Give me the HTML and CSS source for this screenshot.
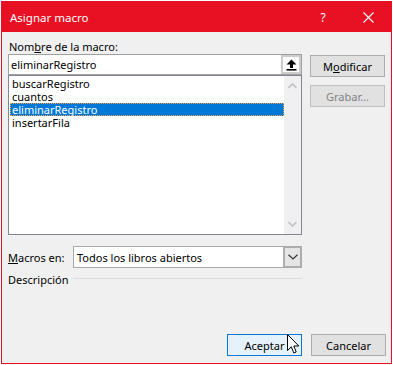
FILE: index.html
```html
<!DOCTYPE html>
<html lang="es">
<head>
<meta charset="utf-8">
<title>Asignar macro</title>
<link rel="stylesheet" href="styles.css">
</head>
<body>
<div class="window">
  <div class="titlebar">
    <span class="title">Asignar macro</span>
    <span class="tb-btn help">?</span>
    <span class="tb-btn close">
      <svg width="11" height="11" viewBox="0 0 11 11"><path d="M0.5 0.5 L10.5 10.5 M10.5 0.5 L0.5 10.5" stroke="#fff" stroke-width="1.1" fill="none"/></svg>
    </span>
  </div>
  <div class="content">
    <div class="top">
      <div class="left">
        <div class="label">Nom<u>b</u>re de la macro:</div>
        <div class="input">
          <span class="input-text">eliminarRegistro</span>
          <span class="up-btn">
            <svg width="11" height="12" viewBox="0 0 11 12"><path d="M5.5 0.5 L10.5 5.5 L7 5.5 L7 9 L4 9 L4 5.5 L0.5 5.5 Z" fill="#000"/><rect x="0.5" y="10" width="10" height="1.6" fill="#000"/></svg>
          </span>
        </div>
        <div class="listbox">
          <div class="items">
            <div class="item">buscarRegistro</div>
            <div class="item">cuantos</div>
            <div class="item selected">eliminarRegistro</div>
            <div class="item">insertarFila</div>
          </div>
          <div class="scrollbar">
            <svg width="9" height="6" viewBox="0 0 9 6"><path d="M0.5 5 L4.5 1 L8.5 5" stroke="#c2c2c2" stroke-width="1.6" fill="none"/></svg>
            <svg width="9" height="6" viewBox="0 0 9 6"><path d="M0.5 1 L4.5 5 L8.5 1" stroke="#c2c2c2" stroke-width="1.6" fill="none"/></svg>
          </div>
        </div>
      </div>
      <div class="right">
        <div class="btn">M<u>o</u>dificar</div>
        <div class="btn disabled">Grabar...</div>
      </div>
    </div>
    <div class="row macros-row">
      <div class="row-label"><u>M</u>acros en:</div>
      <div class="combo">
        <span class="combo-text">Todos los libros abiertos</span>
        <span class="combo-btn">
          <svg width="10" height="6" viewBox="0 0 10 6"><path d="M0.5 0.8 L5 5 L9.5 0.8" stroke="#333" stroke-width="1.2" fill="none"/></svg>
        </span>
      </div>
    </div>
    <div class="row desc-row">
      <div class="row-label">Descripción</div>
      <div class="rule"></div>
    </div>
    <div class="bottom">
      <div class="btn default">Aceptar</div>
      <div class="btn">Cancelar</div>
    </div>
  </div>
  <svg class="cursor" width="13" height="21" viewBox="0 0 13 21"><path d="M0.5 0.5 L0.5 16.5 L4.3 12.8 L6.8 19 L9.2 18 L6.8 12 L11.8 12 Z" fill="#fff" stroke="#000" stroke-width="1" stroke-linejoin="miter"/></svg>
</div>
</body>
</html>
```

FILE: styles.css
```css
* { box-sizing: border-box; }
html, body { margin: 0; padding: 0; }
body {
  background: #ffffff;
  font-family: "Noto Sans", "Open Sans", sans-serif;
  font-size: 11px;
  color: #000;
  width: 393px;
  height: 365px;
  overflow: hidden;
}
u { text-decoration: underline; text-underline-offset: 1px; }

.window {
  position: relative;
  margin: 1px 0 0 1px;
  width: 391px;
  height: 363px;
  border: 1px solid #e81123;
  background: #f0f0f0;
  display: flex;
  flex-direction: column;
}

.titlebar {
  height: 30px;
  background: #e81123;
  color: #fff;
  display: flex;
  align-items: center;
  flex: none;
}
.title {
  flex: 1;
  padding-left: 8px;
  font-size: 11.5px;
}
.tb-btn {
  width: 46px;
  height: 30px;
  display: flex;
  align-items: center;
  justify-content: center;
  font-size: 12px;
}
.close { width: 45px; }

.content {
  flex: 1;
  display: flex;
  flex-direction: column;
  padding: 0 5px 7px 6px;
}

.top {
  display: flex;
  gap: 8px;
}
.left {
  width: 294px;
  display: flex;
  flex-direction: column;
  padding-top: 7px;
}
.label {
  height: 15px;
  line-height: 15px;
  padding-left: 1px;
}
.input {
  height: 21px;
  background: #fff;
  border: 1px solid #a0a0a0;
  display: flex;
  align-items: center;
  justify-content: space-between;
  padding-left: 2px;
}
.up-btn {
  width: 20px;
  height: 19px;
  background: #fff;
  border: 2px solid #cccccc;
  display: flex;
  align-items: center;
  justify-content: center;
}
.listbox {
  height: 160px;
  background: #fff;
  border: 1px solid #828790;
  display: flex;
}
.items {
  flex: 1;
  padding: 1px 0 0 1px;
}
.item {
  height: 13px;
  line-height: 13px;
  padding-left: 2px;
}
.item.selected {
  background: #0078d7;
  color: #fff;
  outline: 1px dotted #f7a04a;
  outline-offset: -1px;
}
.scrollbar {
  width: 17px;
  background: #f0f0f0;
  display: flex;
  flex-direction: column;
  justify-content: space-between;
  align-items: center;
  padding: 7px 0 7px;
}

.right {
  width: 75px;
  display: flex;
  flex-direction: column;
  gap: 8px;
  padding-top: 23px;
}
.btn {
  height: 22px;
  width: 75px;
  background: #e1e1e1;
  border: 1px solid #adadad;
  display: flex;
  align-items: center;
  justify-content: center;
}
.btn.disabled {
  color: #838383;
  background: #e1e1e1;
  border-color: #bfbfbf;
}
.btn.default {
  background: #e5f1fb;
  border: 1px solid #0078d7;
}

.row {
  width: 294px;
  display: flex;
  align-items: center;
}
.row-label {
  width: 65px;
  flex: none;
}
.macros-row {
  margin-top: 11px;
  height: 22px;
}
.combo {
  flex: 1;
  height: 22px;
  background: #fff;
  border: 1px solid #a9a9a9;
  display: flex;
  align-items: center;
  justify-content: space-between;
  padding-left: 3px;
}
.combo-btn {
  width: 19px;
  height: 22px;
  margin: -1px -1px -1px 0;
  background: #e5e5e5;
  border: 2px solid #adadad;
  display: flex;
  align-items: center;
  justify-content: center;
}
.desc-row {
  margin-top: 3px;
  height: 17px;
}
.rule {
  flex: 1;
  height: 1px;
  border-top: 1px solid #dadada;
  margin-top: -3px;
}

.bottom {
  margin-top: auto;
  display: flex;
  justify-content: flex-end;
  gap: 9px;
}

.cursor {
  position: absolute;
  left: 285px;
  top: 332px;
}
```
